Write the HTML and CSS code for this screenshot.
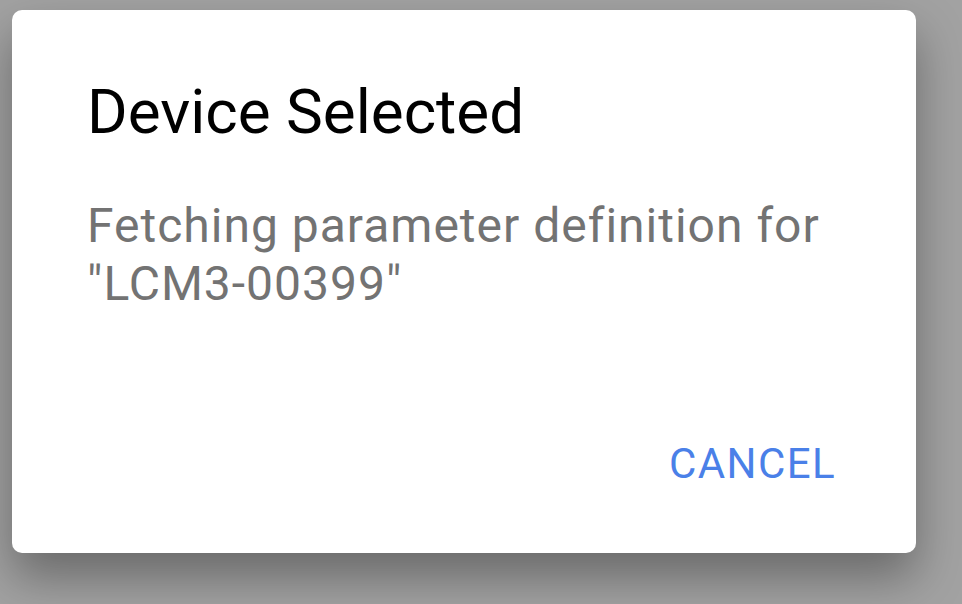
FILE: index.html
```html
<!DOCTYPE html>
<html lang="en">
<head>
    <meta charset="UTF-8">
    <title>Device Selected</title>
    <link rel="stylesheet" href="styles.css">
</head>
<body>

<div class="dialog">
    <h1 class="dialog-title">Device Selected</h1>
    <p class="dialog-body">Fetching parameter definition for "LCM3-00399"</p>
    <div class="dialog-actions">
        <button class="dialog-button">CANCEL</button>
    </div>
</div>

</body>
</html>
```

FILE: styles.css
```css
html, body {
    margin: 0;
    padding: 0;
    height: 100%;
}

body {
    font-family: Roboto, "Noto Sans", sans-serif;
    background-color: #a2a2a2;
    overflow: hidden;
}

.dialog {
    margin: 10px 0 0 12px;
    width: 904px;
    height: 543px;
    box-sizing: border-box;
    padding: 0 75px;
    background-color: #fff;
    border-radius: 10px;
    box-shadow: 0 24px 48px rgba(0, 0, 0, 0.35);
    display: flex;
    flex-direction: column;
}

.dialog-title {
    margin: 71px 0 0 0;
    font-size: 62px;
    font-weight: 400;
    line-height: 62px;
    color: #000;
}

.dialog-body {
    margin: 54px 0 0 0;
    width: 754px;
    font-size: 48px;
    line-height: 58px;
    letter-spacing: 1px;
    color: #737373;
}

.dialog-actions {
    margin-top: auto;
    margin-bottom: 65px;
    display: flex;
    justify-content: flex-end;
}

.dialog-button {
    margin-right: 5px;
    padding: 0;
    border: none;
    background: none;
    font-family: Roboto, "Noto Sans", sans-serif;
    font-size: 42px;
    letter-spacing: 1.4px;
    color: #4a80e8;
    cursor: pointer;
}
```
